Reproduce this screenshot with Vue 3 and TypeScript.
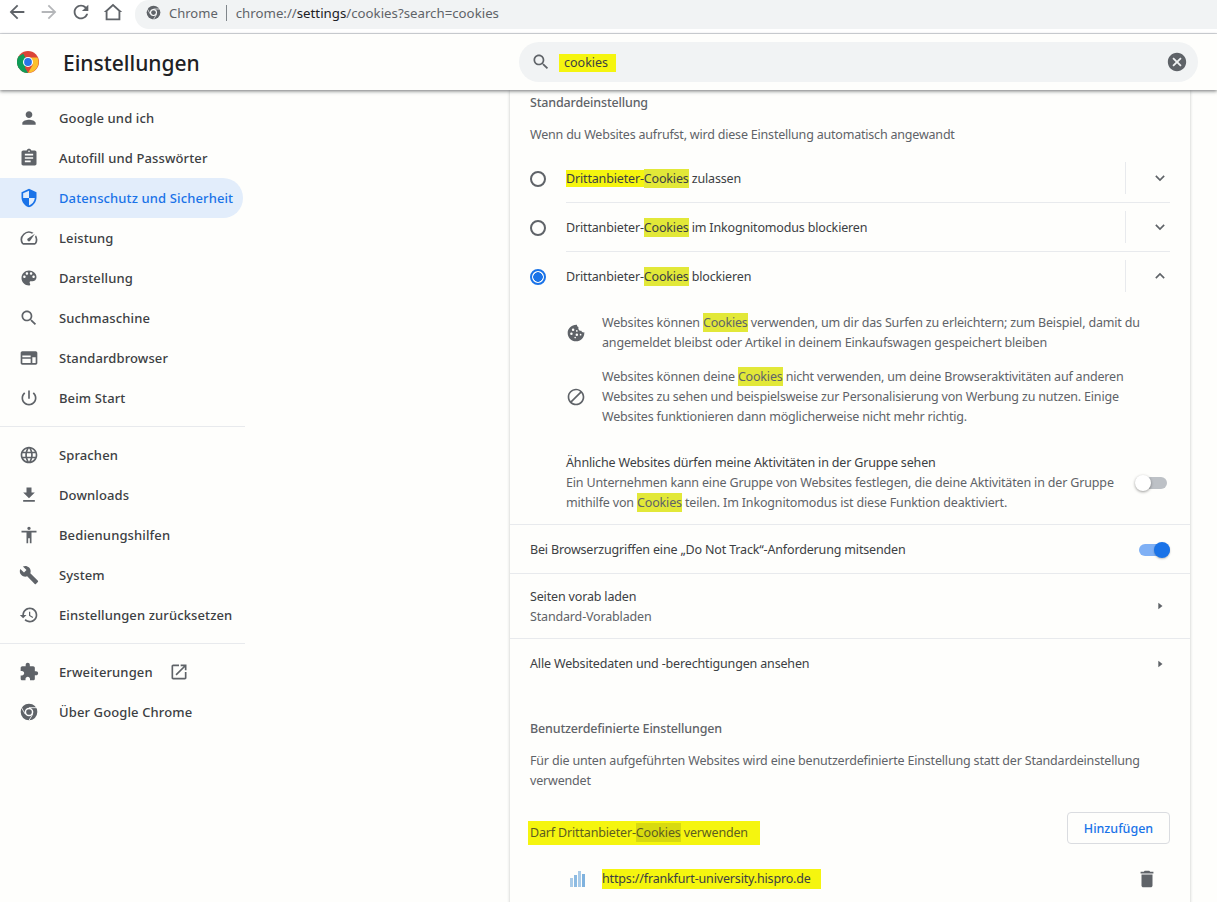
<script setup lang="ts">
interface NavItem { label: string; d: string; active?: boolean }
const P = {
  person: 'M12 12c2.21 0 4-1.79 4-4s-1.79-4-4-4-4 1.79-4 4 1.79 4 4 4zm0 2c-2.67 0-8 1.34-8 4v2h16v-2c0-2.66-5.33-4-8-4z',
  assign: 'M19 3h-4.18C14.4 1.84 13.3 1 12 1c-1.3 0-2.4.84-2.82 2H5c-1.1 0-2 .9-2 2v14c0 1.1.9 2 2 2h14c1.1 0 2-.9 2-2V5c0-1.1-.9-2-2-2zm-7 0c.55 0 1 .45 1 1s-.45 1-1 1-1-.45-1-1 .45-1 1-1zm2 14H7v-2h7v2zm3-4H7v-2h10v2zm0-4H7V7h10v2z',
  shield: 'M12 1L3 5v6c0 5.55 3.84 10.74 9 12 5.16-1.26 9-6.45 9-12V5l-9-4zm0 10.99h7c-.53 4.12-3.28 7.79-7 8.94V12H5V6.3l7-3.11v8.8z',
  speed: 'M20.38 8.57l-1.23 1.85a8 8 0 0 1-.22 7.58H5.07A8 8 0 0 1 15.58 6.85l1.85-1.23A10 10 0 0 0 3.35 19a2 2 0 0 0 1.72 1h13.85a2 2 0 0 0 1.74-1 10 10 0 0 0-.27-10.44zm-9.79 6.84a2 2 0 0 0 2.83 0l5.66-8.49-8.49 5.66a2 2 0 0 0 0 2.83z',
  palette: 'M12 3c-4.97 0-9 4.03-9 9s4.03 9 9 9c.83 0 1.5-.67 1.5-1.5 0-.39-.15-.74-.39-1.01-.23-.26-.38-.61-.38-.99 0-.83.67-1.5 1.5-1.5H16c2.76 0 5-2.24 5-5 0-4.42-4.03-8-9-8zm-5.5 9c-.83 0-1.5-.67-1.5-1.5S5.67 9 6.5 9 8 9.67 8 10.5 7.33 12 6.5 12zm3-4C8.67 8 8 7.33 8 6.5S8.67 5 9.5 5s1.5.67 1.5 1.5S10.33 8 9.5 8zm5 0c-.83 0-1.5-.67-1.5-1.5S13.67 5 14.5 5s1.5.67 1.5 1.5S15.33 8 14.5 8zm3 4c-.83 0-1.5-.67-1.5-1.5S16.67 9 17.5 9s1.5.67 1.5 1.5-.67 1.5-1.5 1.5z',
  search: 'M15.5 14h-.79l-.28-.27C15.41 12.59 16 11.11 16 9.5 16 5.91 13.09 3 9.5 3S3 5.91 3 9.5 5.91 16 9.5 16c1.61 0 3.09-.59 4.23-1.57l.27.28v.79l5 4.99L20.49 19l-4.99-5zm-6 0C7.01 14 5 11.99 5 9.5S7.01 5 9.5 5 14 7.01 14 9.5 11.99 14 9.5 14z',
  web: 'M20 4H4c-1.1 0-2 .9-2 2v12c0 1.1.9 2 2 2h16c1.1 0 2-.9 2-2V6c0-1.1-.9-2-2-2zM4 18v-5h10v5H4zm16 0h-4v-7h4v7zm-16-7V9h10v2H4z',
  power: 'M13 3h-2v10h2V3zm4.83 2.17l-1.42 1.42C17.99 7.86 19 9.81 19 12c0 3.87-3.13 7-7 7s-7-3.13-7-7c0-2.19 1.01-4.14 2.58-5.42L6.17 5.17C4.23 6.82 3 9.26 3 12c0 4.97 4.03 9 9 9s9-4.03 9-9c0-2.74-1.23-5.18-3.17-6.83z',
  lang: 'M11.99 2C6.47 2 2 6.48 2 12s4.47 10 9.99 10C17.52 22 22 17.52 22 12S17.52 2 11.99 2zm6.93 6h-2.95c-.32-1.25-.78-2.45-1.38-3.56 1.84.63 3.37 1.91 4.33 3.56zM12 4.04c.83 1.2 1.48 2.53 1.91 3.96h-3.82c.43-1.43 1.08-2.76 1.91-3.96zM4.26 14C4.1 13.36 4 12.69 4 12s.1-1.36.26-2h3.38c-.08.66-.14 1.32-.14 2 0 .68.06 1.34.14 2H4.26zm.82 2h2.95c.32 1.25.78 2.45 1.38 3.56-1.84-.63-3.37-1.9-4.33-3.56zm2.95-8H5.08c.96-1.66 2.49-2.93 4.33-3.56C8.81 5.55 8.35 6.75 8.03 8zM12 19.96c-.83-1.2-1.48-2.53-1.91-3.96h3.82c-.43 1.43-1.08 2.76-1.91 3.96zM14.34 14H9.66c-.09-.66-.16-1.32-.16-2 0-.68.07-1.35.16-2h4.68c.09.65.16 1.32.16 2 0 .68-.07 1.34-.16 2zm.25 5.56c.6-1.11 1.06-2.31 1.38-3.56h2.95c-.96 1.65-2.49 2.93-4.33 3.56zM16.36 14c.08-.66.14-1.32.14-2 0-.68-.06-1.34-.14-2h3.38c.16.64.26 1.31.26 2s-.1 1.36-.26 2h-3.38z',
  download: 'M19 9h-4V3H9v6H5l7 7 7-7zM5 18v2h14v-2H5z',
  access: 'M12 2c1.1 0 2 .9 2 2s-.9 2-2 2-2-.9-2-2 .9-2 2-2zm9 7h-6v13h-2v-6h-2v6H9V9H3V7h18v2z',
  build: 'M22.7 19l-9.1-9.1c.9-2.3.4-5-1.5-6.9-2-2-5-2.4-7.4-1.3L9 6 6 9 1.6 4.7C.4 7.1.9 10.1 2.9 12.1c1.9 1.9 4.6 2.4 6.9 1.5l9.1 9.1c.4.4 1 .4 1.4 0l2.3-2.3c.5-.4.5-1.1.1-1.4z',
  restore: 'M13 3c-4.97 0-9 4.03-9 9H1l3.89 3.89.07.14L9 12H6c0-3.87 3.13-7 7-7s7 3.13 7 7-3.13 7-7 7c-1.93 0-3.68-.79-4.94-2.06l-1.42 1.42C8.27 19.99 10.51 21 13 21c4.97 0 9-4.03 9-9s-4.03-9-9-9zm-1 5v5l4.28 2.54.72-1.21-3.5-2.08V8H12z',
  ext: 'M20.5 11H19V7c0-1.1-.9-2-2-2h-4V3.5C13 2.12 11.88 1 10.5 1S8 2.12 8 3.5V5H4c-1.1 0-1.99.9-1.99 2v3.8H3.5c1.49 0 2.7 1.21 2.7 2.7s-1.21 2.7-2.7 2.7H2V20c0 1.1.9 2 2 2h3.8v-1.5c0-1.49 1.21-2.7 2.7-2.7 1.49 0 2.7 1.21 2.7 2.7V22H17c1.1 0 2-.9 2-2v-4h1.5c1.38 0 2.5-1.12 2.5-2.5S21.88 11 20.5 11z',
  newwin: 'M19 19H5V5h7V3H5c-1.11 0-2 .9-2 2v14c0 1.1.89 2 2 2h14c1.1 0 2-.9 2-2v-7h-2v7zM14 3v2h3.59l-9.83 9.83 1.41 1.41L19 6.41V10h2V3h-7z',
  del: 'M6 19c0 1.1.9 2 2 2h8c1.1 0 2-.9 2-2V7H6v12zM19 4h-3.5l-1-1h-5l-1 1H5v2h14V4z',
  cancel: 'M12 2C6.47 2 2 6.47 2 12s4.47 10 10 10 10-4.47 10-10S17.53 2 12 2zm5 13.59L15.59 17 12 13.41 8.41 17 7 15.59 10.59 12 7 8.41 8.41 7 12 10.59 15.59 7 17 8.41 13.41 12 17 15.59z',
  block: 'M12 2C6.48 2 2 6.48 2 12s4.48 10 10 10 10-4.48 10-10S17.52 2 12 2zM4 12c0-4.42 3.58-8 8-8 1.85 0 3.55.63 4.9 1.69L5.69 16.9C4.63 15.55 4 13.85 4 12zm8 8c-1.85 0-3.55-.63-4.9-1.69L18.31 7.1C19.37 8.45 20 10.15 20 12c0 4.42-3.58 8-8 8z',
  back: 'M20 11H7.83l5.59-5.59L12 4l-8 8 8 8 1.41-1.41L7.83 13H20v-2z',
  forward: 'M12 4l-1.41 1.41L16.17 11H4v2h12.17l-5.58 5.59L12 20l8-8z',
  refresh: 'M17.65 6.35C16.2 4.9 14.21 4 12 4c-4.42 0-7.99 3.58-7.99 8s3.57 8 7.99 8c3.73 0 6.84-2.55 7.73-6h-2.08c-.82 2.33-3.04 4-5.65 4-3.31 0-6-2.69-6-6s2.69-6 6-6c1.66 0 3.14.69 4.22 1.78L13 11h7V4l-2.35 2.35z',
  home: 'M12 5.7l6 5.4V19H6v-7.9l6-5.4M12 3L2 12h2v9h16v-9h2L12 3z',
  cookie: 'M21.9 11.2c-1.7.3-3-.4-3.5-2-1.9.4-3.6-.9-3.6-3 0-.5 0-.9.2-1.3-1.3-.4-1.9-1.4-1.9-2.8C6.8 1.8 2 6.4 2 12s4.5 10 10 10 10-4.5 10-10v-.8zM8.5 9.5a1.5 1.5 0 1 1 0-3 1.5 1.5 0 0 1 0 3zm-2 5a1.5 1.5 0 1 1 0-3 1.5 1.5 0 0 1 0 3zm6.5 1a1.5 1.5 0 1 1 0-3 1.5 1.5 0 0 1 0 3zm0-5a1 1 0 1 1 0-2 1 1 0 0 1 0 2zm4.5 4.5a1 1 0 1 1 0-2 1 1 0 0 1 0 2zm-6.500 3.500a1 1 0 1 1 0-2 1 1 0 0 1 0 2z',
}
const group1: NavItem[] = [
  { label: 'Google und ich', d: P.person },
  { label: 'Autofill und Passwörter', d: P.assign },
  { label: 'Datenschutz und Sicherheit', d: P.shield, active: true },
  { label: 'Leistung', d: P.speed },
  { label: 'Darstellung', d: P.palette },
  { label: 'Suchmaschine', d: P.search },
  { label: 'Standardbrowser', d: P.web },
  { label: 'Beim Start', d: P.power },
]
const group2: NavItem[] = [
  { label: 'Sprachen', d: P.lang },
  { label: 'Downloads', d: P.download },
  { label: 'Bedienungshilfen', d: P.access },
  { label: 'System', d: P.build },
  { label: 'Einstellungen zurücksetzen', d: P.restore },
]
</script>

<template>
  <div class="page">
    <div class="toolbar">
      <svg class="tb-icon" viewBox="0 0 24 24"><path :d="P.back" /></svg>
      <svg class="tb-icon fwd" viewBox="0 0 24 24"><path :d="P.forward" /></svg>
      <svg class="tb-icon" viewBox="0 0 24 24"><path :d="P.refresh" /></svg>
      <svg class="tb-icon" viewBox="0 0 24 24"><path :d="P.home" /></svg>
      <div class="omnibox">
        <svg class="mono-chrome" viewBox="0 0 24 24">
          <circle cx="12" cy="12" r="11" fill="#5f6368" />
          <circle cx="12" cy="12" r="5.6" fill="#fff" />
          <circle cx="12" cy="12" r="3.8" fill="#5f6368" />
          <path d="M12 6.400H22M7.200 15L2.200 6.500M16.800 15L11.800 23.500" stroke="#f1f3f4" stroke-width="1.200" fill="none" />
        </svg>
        <span class="chip">Chrome</span>
        <span class="omni-sep"></span>
        <span class="url">chrome://<b>settings</b>/cookies?search=cookies</span>
      </div>
    </div>

    <header class="header">
      <div class="brand">
        <svg class="logo" viewBox="0 0 48 48">
          <circle cx="24" cy="24" r="24" fill="#db4437" />
          <path d="M24 24L13.600 42 3.200 36A24 24 0 0 1 3.200 12L13.600 6z" fill="#0f9d58" />
          <path d="M3.200 12L24 48A24 24 0 0 1 3.200 36z" fill="#0f9d58" />
          <path d="M24 14H44.800A24 24 0 0 1 24 48L34.400 30z" fill="#fbc02d" />
          <circle cx="24" cy="24" r="11" fill="#fff" />
          <circle cx="24" cy="24" r="8.500" fill="#2a73e8" />
        </svg>
        <h1 class="title">Einstellungen</h1>
      </div>
      <div class="search">
        <svg class="search-ic" viewBox="0 0 24 24"><path :d="P.search" /></svg>
        <span class="search-text">cookies</span>
        <svg class="clear-ic" viewBox="0 0 24 24"><path :d="P.cancel" /></svg>
      </div>
    </header>

    <div class="body">
      <nav class="nav">
        <a v-for="it in group1" :key="it.label" class="nav-item" :class="{ active: it.active }">
          <svg class="nav-ic" viewBox="0 0 24 24"><path :d="it.d" /></svg>{{ it.label }}
        </a>
        <div class="nav-sep"></div>
        <a v-for="it in group2" :key="it.label" class="nav-item">
          <svg class="nav-ic" viewBox="0 0 24 24"><path :d="it.d" /></svg>{{ it.label }}
        </a>
        <div class="nav-sep"></div>
        <a class="nav-item">
          <svg class="nav-ic" viewBox="0 0 24 24"><path :d="P.ext" /></svg>Erweiterungen
          <svg class="newwin" viewBox="0 0 24 24"><path :d="P.newwin" /></svg>
        </a>
        <a class="nav-item">
          <svg class="nav-ic" viewBox="0 0 24 24">
            <circle cx="12" cy="12" r="10" fill="#5f6368" />
            <circle cx="12" cy="12" r="5.200" fill="#fff" />
            <circle cx="12" cy="12" r="3.400" fill="#5f6368" />
            <path d="M12 6.800H21M7.500 14.600L3 6.800M16.500 14.600L12 22" stroke="#fff" stroke-width="1" fill="none" />
          </svg>Über Google Chrome
        </a>
      </nav>

      <main class="card">
        <h2 class="sec-title first">Standardeinstellung</h2>
        <p class="sec-desc">Wenn du Websites aufrufst, wird diese Einstellung automatisch angewandt</p>

        <div class="radios">
          <div class="radio-row">
            <span class="radio"></span>
            <span class="radio-label"><span class="marker">Drittanbieter-</span><mark>Cookies</mark> zulassen</span>
            <span class="vsep"></span>
            <svg class="chev" viewBox="0 0 24 24"><path d="M7 9.500l5 5 5-5" /></svg>
          </div>
          <div class="radio-row">
            <span class="radio"></span>
            <span class="radio-label">Drittanbieter-<mark>Cookies</mark> im Inkognitomodus blockieren</span>
            <span class="vsep"></span>
            <svg class="chev" viewBox="0 0 24 24"><path d="M7 9.500l5 5 5-5" /></svg>
          </div>
          <div class="radio-row last">
            <span class="radio on"></span>
            <span class="radio-label">Drittanbieter-<mark>Cookies</mark> blockieren</span>
            <span class="vsep"></span>
            <svg class="chev" viewBox="0 0 24 24"><path d="M7 14.500l5-5 5 5" /></svg>
          </div>
        </div>

        <div class="bullets">
          <div class="bullet">
            <svg class="bullet-ic" viewBox="0 0 24 24"><path :d="P.cookie" fill-rule="evenodd" /></svg>
            <p>Websites können <mark>Cookies</mark> verwenden, um dir das Surfen zu erleichtern; zum Beispiel, damit du angemeldet bleibst oder Artikel in deinem Einkaufswagen gespeichert bleiben</p>
          </div>
          <div class="bullet">
            <svg class="bullet-ic" viewBox="0 0 24 24"><path :d="P.block" /></svg>
            <p>Websites können deine <mark>Cookies</mark> nicht verwenden, um deine Browseraktivitäten auf anderen Websites zu sehen und beispielsweise zur Personalisierung von Werbung zu nutzen. Einige Websites funktionieren dann möglicherweise nicht mehr richtig.</p>
          </div>
        </div>

        <div class="related">
          <div class="related-text">
            <div class="dark">Ähnliche Websites dürfen meine Aktivitäten in der Gruppe sehen</div>
            <div class="muted">Ein Unternehmen kann eine Gruppe von Websites festlegen, die deine Aktivitäten in der Gruppe mithilfe von <mark>Cookies</mark> teilen. Im Inkognitomodus ist diese Funktion deaktiviert.</div>
          </div>
          <span class="toggle"></span>
        </div>

        <div class="row dnt">
          <span class="dark">Bei Browserzugriffen eine „Do Not Track“-Anforderung mitsenden</span>
          <span class="toggle on"></span>
        </div>
        <div class="row two">
          <div>
            <div class="dark">Seiten vorab laden</div>
            <div class="muted">Standard-Vorabladen</div>
          </div>
          <svg class="arrow" viewBox="0 0 24 24"><path d="M10 8l5 4-5 4z" /></svg>
        </div>
        <div class="row plain">
          <span class="dark">Alle Websitedaten und -berechtigungen ansehen</span>
          <svg class="arrow" viewBox="0 0 24 24"><path d="M10 8l5 4-5 4z" /></svg>
        </div>

        <h2 class="sec-title custom">Benutzerdefinierte Einstellungen</h2>
        <p class="sec-desc wrap">Für die unten aufgeführten Websites wird eine benutzerdefinierte Einstellung statt der Standardeinstellung verwendet</p>

        <div class="list-head">
          <span class="marker-block muted-marker">Darf Drittanbieter-<mark class="deep">Cookies</mark> verwenden</span>
          <button class="add">Hinzufügen</button>
        </div>
        <div class="site">
          <svg class="site-ic" viewBox="0 0 16 16">
            <rect x="0" y="7" width="3" height="9" fill="#a9cbe8" />
            <rect x="4" y="4" width="3" height="12" fill="#8dbbe2" />
            <rect x="8" y="0" width="3" height="16" fill="#a9cbe8" />
            <rect x="12" y="3" width="3" height="13" fill="#7fb2de" />
          </svg>
          <span class="marker-block site-url">https://frankfurt-university.hispro.de</span>
          <svg class="trash" viewBox="0 0 24 24"><path :d="P.del" /></svg>
        </div>
      </main>
    </div>
  </div>
</template>

<style>
html, body { margin: 0; background: #fefefc; }
</style>

<style scoped>
.page {
  width: 1217px;
  height: 902px;
  overflow: hidden;
  display: flex;
  flex-direction: column;
  background: #fefefc;
  font-family: "Noto Sans", "Open Sans", sans-serif;
  font-size: 12.5px;
  line-height: 20px;
  color: #5f6368;
}
.toolbar {
  height: 33px;
  flex: none;
  display: flex;
  align-items: flex-start;
  padding-left: 6px;
  border-bottom: 1px solid #dadce0;
  background: #fff;
  box-sizing: content-box;
}
.tb-icon { width: 22px; height: 22px; fill: #5f6368; margin: 1px 10px 0 0; flex: none; }
.tb-icon.fwd { fill: #b4b6b9; }
.omnibox {
  margin-left: 1px;
  flex: 1;
  height: 29px;
  background: #f1f3f4;
  border-radius: 14px 0 0 14px;
  display: flex;
  align-items: center;
  padding: 0 0 4px 11px;
  box-sizing: border-box;
  font-size: 13px;
}
.mono-chrome { width: 15px; height: 15px; flex: none; }
.chip { margin-left: 8px; color: #5f6368; }
.omni-sep { width: 1px; height: 16px; background: #80868b; margin: 0 9px 0 8px; }
.url { color: #5f6368; font-size: 13.25px; }
.url b { font-weight: 400; color: #202124; }

.header {
  height: 56px;
  flex: none;
  display: flex;
  align-items: center;
  background: #fefefc;
  box-shadow: 0 1px 3px rgba(60, 64, 67, .55), 0 2px 4px rgba(60, 64, 67, .2);
  position: relative;
  z-index: 2;
}
.brand { width: 519px; display: flex; align-items: center; padding-left: 17px; box-sizing: border-box; flex: none; }
.logo { width: 22px; height: 22px; flex: none; }
.title { margin: 2px 0 0 24px; font-size: 21px; font-weight: 500; color: #202124; line-height: 28px; }
.search {
  width: 679px;
  height: 40px;
  flex: none;
  border-radius: 20px;
  background: #f1f3f4;
  display: flex;
  align-items: center;
  padding: 0 12px;
  box-sizing: border-box;
}
.search-ic { width: 20px; height: 20px; fill: #5f6368; flex: none; }
.search-text {
  margin: 2px 0 0 8px;
  background: #f5f50f;
  padding: 0 8px 0 5px;
  height: 18px;
  line-height: 18px;
  color: #3c4043;
}
.clear-ic { width: 22px; height: 22px; fill: #5f6368; margin-left: auto; margin-right: -2px; }

.body { flex: 1; display: flex; min-height: 0; }
.nav { width: 245px; flex: none; padding-top: 8px; margin-right: 265px; }
.nav-item {
  height: 40px;
  width: 243px;
  display: flex;
  align-items: center;
  padding-left: 19px;
  box-sizing: border-box;
  color: #3c4043;
  font-weight: 500;
  font-size: 13px;
  letter-spacing: .12px;
  border-radius: 0 20px 20px 0;
}
.nav-item.active { background: #e2edfb; color: #1a73e8; }
.nav-ic { width: 20px; height: 20px; fill: #5f6368; margin-right: 20px; flex: none; }
.nav-item.active .nav-ic { fill: #1a73e8; }
.newwin { width: 20px; height: 20px; fill: #5f6368; margin-left: 16px; }
.nav-sep { height: 1px; background: #e8eaed; margin: 8px 0; }

.card {
  width: 680px;
  flex: none;
  box-sizing: border-box;
  padding: 3px 20px 0;
  background: #fefefc;
  box-shadow: 0 0 3px rgba(60, 64, 67, .3);
  height: 900px;
  letter-spacing: -.16px;
}
.sec-title { margin: 0; font-size: 12.5px; font-weight: 500; line-height: 20px; color: #5f6368; }
.sec-desc { margin: 12px 0 9px; line-height: 20px; letter-spacing: -.2px; }
.radios { display: flex; flex-direction: column; }
.radio-row {
  height: 49px;
  display: flex;
  align-items: center;
  position: relative;
  box-sizing: border-box;
  padding-top: 1px;
}
.radio-row::after {
  content: "";
  position: absolute;
  left: 36px;
  right: 0;
  bottom: 0;
  height: 1px;
  background: #e8eaed;
}
.radio-row.last::after { display: none; }
.radio {
  width: 16px;
  height: 16px;
  border: 2px solid #5f6368;
  border-radius: 50%;
  box-sizing: border-box;
  flex: none;
  margin-right: 20px;
}
.radio.on {
  border-color: #1a73e8;
  background: radial-gradient(circle, #1a73e8 0 4.5px, transparent 5px);
}
.radio-label { flex: 1; color: #3c4043; }
.radio-label .marker { background: #f5f50f; }
mark { background: #e2e838; color: inherit; padding: 1px 0; }
.vsep { width: 1px; height: 32px; background: #e8eaed; margin: -2px 24px 0 0; }
.chev { width: 20px; height: 20px; fill: none; stroke: #5f6368; stroke-width: 2; flex: none; margin-top: -2px; }
.bullets { padding: 12px 0 0 36px; display: flex; flex-direction: column; gap: 14px; letter-spacing: -.18px; }
.bullet { display: flex; align-items: center; }
.bullet p { margin: 0; flex: 1; }
.bullet-ic { width: 20px; height: 20px; fill: #5f6368; margin-right: 16px; flex: none; }
.related {
  margin: 26px -20px 0;
  padding: 0 20px 11px 56px;
  display: flex;
  align-items: center;
  gap: 20px;
  border-bottom: 1px solid #e8eaed;
}
.related-text { flex: 1; }
.dark { color: #3c4043; }
.muted { color: #5f6368; }
.toggle {
  width: 31px;
  height: 12px;
  border-radius: 6px;
  background: #bdc1c6;
  position: relative;
  flex: none;
  margin-right: 3px;
}
.toggle::after {
  content: "";
  position: absolute;
  left: -1px;
  top: -2px;
  width: 16px;
  height: 16px;
  border-radius: 50%;
  background: #fff;
  box-shadow: 0 1px 3px rgba(0, 0, 0, .4);
}
.toggle.on { background: #7fb0f5; margin-right: 0; }
.toggle.on::after { left: auto; right: 0; background: #1a73e8; box-shadow: 0 1px 2px rgba(0,0,0,.25); }
.row {
  margin: 0 -20px;
  padding: 2px 20px 0;
  height: 49px;
  display: flex;
  align-items: center;
  justify-content: space-between;
  border-bottom: 1px solid #e8eaed;
  box-sizing: border-box;
}
.row.two { height: 65px; }
.row.two .arrow { margin-top: -2px; }
.row.plain { border-bottom: 0; height: 48px; }
.arrow { width: 20px; height: 20px; fill: #5f6368; flex: none; }
.custom { margin-top: 32px; }
.wrap { margin: 12px 0 0; letter-spacing: -.18px; }
.list-head {
  margin-top: 21px;
  height: 32px;
  display: flex;
  align-items: center;
  justify-content: space-between;
}
.marker-block {
  background: #f5f50f;
  padding: 2px 12px 2px 2px;
  margin-left: -2px;
  color: #5d5d20;
}
.muted-marker { margin-top: 10px; }
mark.deep { background: #d8da10; }
.add {
  width: 103px;
  height: 32px;
  background: #fefefc;
  border: 1px solid #dadce0;
  border-radius: 4px;
  color: #1a73e8;
  font: 500 12.5px "Noto Sans", sans-serif;
  padding: 0;
}
.site { display: flex; align-items: center; height: 46px; padding: 0 12px 0 40px; margin-top: 12px; }
.site-ic { width: 16px; height: 16px; margin-right: 16px; flex: none; }
.site-url { color: #3c4043; padding: 0 10px 0 0; margin-left: 0; flex: none; }
.trash { width: 22px; height: 22px; fill: #5f6368; margin-left: auto; flex: none; }
</style>
